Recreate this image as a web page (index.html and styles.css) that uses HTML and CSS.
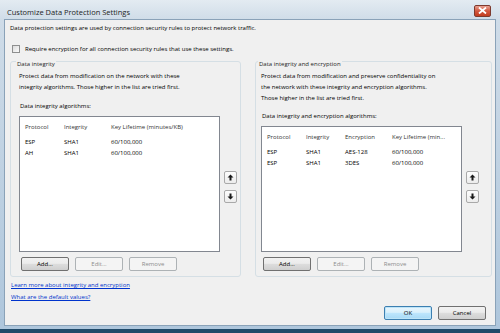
FILE: index.html
```html
<!DOCTYPE html>
<html>
<head>
<meta charset="utf-8">
<link rel="stylesheet" href="styles.css">
</head>
<body>
<div class="window">
  <div class="titlebar">
    <span class="title">Customize Data Protection Settings</span>
    <span class="close"><svg width="9" height="7" viewBox="0 0 9 7"><path d="M1 0.5 L8 6.5 M8 0.5 L1 6.5" stroke="#fff" stroke-width="1.8" fill="none"/></svg></span>
  </div>
  <div class="client">
    <p class="intro">Data protection settings are used by connection security rules to protect network traffic.</p>
    <div class="check"><span class="box"></span><span>Require encryption for all connection security rules that use these settings.</span></div>
    <div class="groups">
      <fieldset class="group group-left">
        <legend>Data integrity</legend>
        <p class="desc">Protect data from modification on the network with these<br>integrity algorithms. Those higher in the list are tried first.</p>
        <div class="listlabel">Data integrity algorithms:</div>
        <div class="listrow">
          <div class="list">
            <div class="row head"><span class="c1">Protocol</span><span class="c2">Integrity</span><span class="ck">Key Lifetime (minutes/KB)</span></div>
            <div class="row"><span class="c1">ESP</span><span class="c2">SHA1</span><span class="ck">60/100,000</span></div>
            <div class="row"><span class="c1">AH</span><span class="c2">SHA1</span><span class="ck">60/100,000</span></div>
          </div>
          <div class="arrows">
            <span class="arrow"><svg width="7" height="7" viewBox="0 0 7 7"><path d="M3.5 0.5 L6.5 3.5 L4.5 3.5 L4.5 6.5 L2.5 6.5 L2.5 3.5 L0.5 3.5 Z" fill="#1a1a1a"/></svg></span>
            <span class="arrow"><svg width="7" height="7" viewBox="0 0 7 7"><path d="M3.5 6.5 L6.5 3.5 L4.5 3.5 L4.5 0.5 L2.5 0.5 L2.5 3.5 L0.5 3.5 Z" fill="#1a1a1a"/></svg></span>
          </div>
        </div>
        <div class="btnrow">
          <span class="btn">Add...</span>
          <span class="btn disabled">Edit...</span>
          <span class="btn disabled">Remove</span>
        </div>
      </fieldset>
      <fieldset class="group group-right">
        <legend>Data integrity and encryption</legend>
        <p class="desc">Protect data from modification and preserve confidentiality on<br>the network with these integrity and encryption algorithms.<br>Those higher in the list are tried first.</p>
        <div class="listlabel">Data integrity and encryption algorithms:</div>
        <div class="listrow">
          <div class="list">
            <div class="row head"><span class="c1">Protocol</span><span class="c2r">Integrity</span><span class="c3">Encryption</span><span class="ck">Key Lifetime (min...</span></div>
            <div class="row"><span class="c1">ESP</span><span class="c2r">SHA1</span><span class="c3">AES-128</span><span class="ck">60/100,000</span></div>
            <div class="row"><span class="c1">ESP</span><span class="c2r">SHA1</span><span class="c3">3DES</span><span class="ck">60/100,000</span></div>
          </div>
          <div class="arrows">
            <span class="arrow"><svg width="7" height="7" viewBox="0 0 7 7"><path d="M3.5 0.5 L6.5 3.5 L4.5 3.5 L4.5 6.5 L2.5 6.5 L2.5 3.5 L0.5 3.5 Z" fill="#1a1a1a"/></svg></span>
            <span class="arrow"><svg width="7" height="7" viewBox="0 0 7 7"><path d="M3.5 6.5 L6.5 3.5 L4.5 3.5 L4.5 0.5 L2.5 0.5 L2.5 3.5 L0.5 3.5 Z" fill="#1a1a1a"/></svg></span>
          </div>
        </div>
        <div class="btnrow">
          <span class="btn">Add...</span>
          <span class="btn disabled">Edit...</span>
          <span class="btn disabled">Remove</span>
        </div>
      </fieldset>
    </div>
    <div class="links">
      <a href="#">Learn more about integrity and encryption</a>
      <a href="#">What are the default values?</a>
    </div>
    <div class="dlgbtns">
      <span class="btn default">OK</span>
      <span class="btn">Cancel</span>
    </div>
  </div>
</div>
</body>
</html>
```

FILE: styles.css
```css
html, body {
  margin: 0;
  padding: 0;
  background: #fff;
}
.window {
  width: 500px;
  height: 333px;
  box-sizing: border-box;
  background: linear-gradient(to bottom, #e3ebf2 0px, #cfdce8 20px, #aec6dc 100%);
  display: flex;
  flex-direction: column;
  padding: 0 4px 0 4px;
  border-bottom: 4px solid #1f4969;
  font-family: "Open Sans", "Noto Sans", sans-serif;
  font-size: 6px;
  color: #000;
}
.titlebar {
  height: 19px;
  display: flex;
  align-items: center;
  justify-content: space-between;
  padding: 0 5px 0 3px;
  flex: none;
}
.title {
  font-size: 7.5px;
  color: #1e1e1e;
  padding-top: 5px;
}
.close {
  width: 15px;
  height: 10px;
  border-radius: 2px;
  background: linear-gradient(to bottom, #e8a192 0%, #d2583f 50%, #c23c1f 100%);
  border: 1px solid #7d3a2e;
  display: flex;
  align-items: center;
  justify-content: center;
  margin-top: 2px;
}
.close svg { display: block; }
.client {
  flex: none;
  height: 307px;
  box-sizing: border-box;
  background: #f0f0f0;
  border: 1px solid #8aa2b8;
  padding: 0 3px 0 5px;
  display: flex;
  flex-direction: column;
}
.intro {
  margin: 3px 0 0 0;
  line-height: 11px;
}
.check {
  display: flex;
  align-items: center;
  margin-top: 9px;
  margin-left: 2px;
  height: 11px;
}
.box {
  width: 8px;
  height: 8px;
  border: 1px solid #8e8f8f;
  background: linear-gradient(135deg, #dcdcdc, #fbfbfb);
  margin-right: 5px;
  box-sizing: border-box;
}
.groups {
  display: flex;
  gap: 14px;
  margin-top: -1px;
  height: 224px;
}
.group {
  margin: 0;
  border: 1px solid #d5dfe5;
  border-radius: 3px;
  padding: 0 4px 5px 8px;
  display: flex;
  flex-direction: column;
  min-width: 0;
  box-sizing: border-box;
}
.group-left { width: 231px; }
.group-right { width: 237px; padding-left: 5px; }
legend {
  padding: 6px 1px 0 1px;
  margin-left: -3px;
  line-height: 11px;
  color: #1e1e1e;
}
.desc {
  margin: 1px 0 0 0;
  line-height: 11px;
}
.listlabel {
  margin-top: 8px;
  margin-bottom: 4px;
  margin-left: 1px;
  line-height: 11px;
}
.group-right .listlabel { margin-top: 7px; }
.listrow {
  flex: 1;
  display: flex;
  min-height: 0;
}
.list {
  width: 201px;
  box-sizing: border-box;
  background: #fff;
  border: 1px solid #828790;
  flex: none;
}
.row {
  display: flex;
  height: 11px;
  line-height: 11px;
  padding-left: 5px;
}
.row.head {
  height: 20px;
  line-height: 20px;
  color: #333;
}
.row span { white-space: nowrap; }
.c1 { width: 39px; }
.c2 { width: 47px; }
.c2r { width: 39px; }
.c3 { width: 47px; }
.arrows {
  display: flex;
  flex-direction: column;
  gap: 6px;
  margin-left: 4px;
  padding-top: 55px;
}
.group-right .arrows { padding-top: 45px; }
.arrow {
  width: 13px;
  height: 13px;
  box-sizing: border-box;
  border: 1px solid #a9a9a9;
  border-radius: 2px;
  background: linear-gradient(to bottom, #fdfdfd, #ececec);
  display: flex;
  align-items: center;
  justify-content: center;
}
.arrow svg { display: block; }
.btnrow {
  display: flex;
  gap: 6px;
  margin-top: 5px;
  margin-left: 2px;
}
.btn {
  width: 48px;
  height: 14px;
  box-sizing: border-box;
  border: 1px solid #707070;
  border-radius: 2px;
  background: linear-gradient(to bottom, #f2f2f2 0%, #ebebeb 45%, #dddddd 50%, #cfcfcf 100%);
  display: flex;
  align-items: center;
  justify-content: center;
  color: #000;
}
.btn.disabled {
  border-color: #adb2b5;
  background: #f4f4f4;
  color: #8d8d8d;
}
.btn.default {
  border-color: #3c7fb1;
  background: linear-gradient(to bottom, #eaf6fd 0%, #d9f0fc 45%, #bee6fd 50%, #a7d9f5 100%);
  box-shadow: inset 0 0 0 1px #bde4f8;
}
.links {
  display: flex;
  flex-direction: column;
  margin-top: 2px;
  margin-left: 1px;
  line-height: 12px;
}
.links a {
  color: #0033cc;
  text-decoration: underline;
}
.dlgbtns {
  display: flex;
  justify-content: flex-end;
  gap: 6px;
  margin-top: 3px;
  margin-right: 6px;
}
```
